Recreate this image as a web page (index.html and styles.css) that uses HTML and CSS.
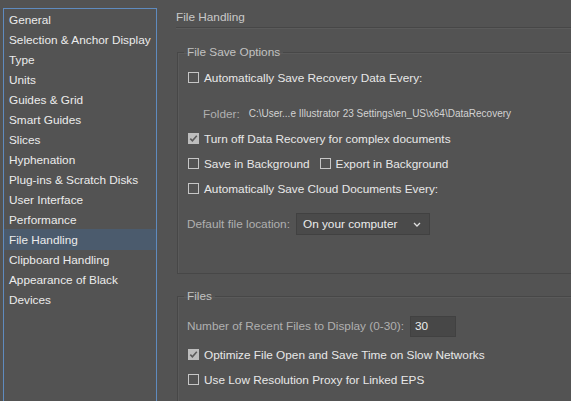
FILE: index.html
```html
<!DOCTYPE html>
<html>
<head>
<meta charset="utf-8">
<link rel="stylesheet" href="styles.css">
</head>
<body>
<div class="page">
  <ul class="sidebar">
    <li>General</li>
    <li>Selection &amp; Anchor Display</li>
    <li>Type</li>
    <li>Units</li>
    <li>Guides &amp; Grid</li>
    <li>Smart Guides</li>
    <li>Slices</li>
    <li>Hyphenation</li>
    <li>Plug-ins &amp; Scratch Disks</li>
    <li>User Interface</li>
    <li>Performance</li>
    <li class="active">File Handling</li>
    <li>Clipboard Handling</li>
    <li>Appearance of Black</li>
    <li>Devices</li>
  </ul>
  <div class="main">
    <div class="title">File Handling</div>
    <fieldset class="group save">
      <legend>File Save Options</legend>
      <div class="row"><span class="cb"></span><span class="lbl">Automatically Save Recovery Data Every:</span></div>
      <div class="row folder"><span class="dim">Folder:</span><span class="path">C:\User...e Illustrator 23 Settings\en_US\x64\DataRecovery</span></div>
      <div class="row"><span class="cb on"><svg viewBox="0 0 11 11" width="11" height="11"><path d="M2.3 5.6 L4.4 7.8 L8.8 2.8" fill="none" stroke="#5b5b5b" stroke-width="1.6"/></svg></span><span class="lbl">Turn off Data Recovery for complex documents</span></div>
      <div class="row"><span class="cb"></span><span class="lbl">Save in Background</span><span class="cb second"></span><span class="lbl">Export in Background</span></div>
      <div class="row"><span class="cb"></span><span class="lbl">Automatically Save Cloud Documents Every:</span></div>
      <div class="locrow"><span class="dim">Default file location:</span>
        <div class="select"><span>On your computer</span><svg viewBox="0 0 8 5" width="8" height="5"><path d="M1 1 L4 4 L7 1" fill="none" stroke="#e0e0e0" stroke-width="1.3"/></svg></div>
      </div>
    </fieldset>
    <fieldset class="group files">
      <legend>Files</legend>
      <div class="numrow"><span class="dim">Number of Recent Files to Display (0-30):</span><div class="input">30</div></div>
      <div class="row"><span class="cb on"><svg viewBox="0 0 11 11" width="11" height="11"><path d="M2.3 5.6 L4.4 7.8 L8.8 2.8" fill="none" stroke="#5b5b5b" stroke-width="1.6"/></svg></span><span class="lbl">Optimize File Open and Save Time on Slow Networks</span></div>
      <div class="row"><span class="cb"></span><span class="lbl">Use Low Resolution Proxy for Linked EPS</span></div>
    </fieldset>
  </div>
</div>
</body>
</html>
```
FILE: styles.css
```css
html, body {
  margin: 0;
  padding: 0;
  background: #535353;
  overflow: hidden;
  width: 571px;
  height: 401px;
}
body {
  font-family: "Liberation Sans", Arial, sans-serif;
  font-size: 11.8px;
  color: #e6e6e6;
}
.page {
  display: flex;
  align-items: flex-start;
  height: 401px;
  overflow: hidden;
}
.sidebar {
  list-style: none;
  margin: 8px 0 0 3px;
  padding: 1px 0 0 0;
  width: 152px;
  height: 400px;
  border: 1px solid #5f8bbf;
  flex: none;
}
.sidebar li {
  height: 20px;
  line-height: 20px;
  padding-left: 5px;
  white-space: nowrap;
  color: #ececec;
}
.sidebar li.active {
  background: #4b5b6d;
  margin-top: -1px;
  padding-top: 1px;
}
.main {
  margin-left: 19px;
  width: 400px;
  flex: none;
}
.title {
  padding-top: 10px;
  padding-bottom: 3px;
  line-height: 14px;
  color: #c9c9c9;
  border-bottom: 1px solid #474747;
  box-shadow: 0 1px 0 #5b5b5b;
}
.group {
  margin: 0 0 0 1px;
  border: 1px solid #474747;
  border-right: none;
  padding: 0 0 0 9px;
  box-shadow: 1px 1px 0 #5a5a5a inset;
}
.group legend {
  padding: 0 3px;
  margin-left: -3px;
  line-height: 14px;
  color: #c2c2c2;
}
.save {
  margin-top: 17px;
  padding-top: 6px;
  padding-bottom: 38px;
}
.files {
  margin-top: 15px;
  padding-top: 11px;
  padding-bottom: 20px;
}
.row {
  height: 25px;
  display: flex;
  align-items: center;
  white-space: nowrap;
}
.cb {
  width: 9px;
  height: 9px;
  border: 1px solid #c6c6c6;
  margin-left: 1px;
  margin-right: 5px;
  flex: none;
  position: relative;
}
.cb.on {
  background: #bdbdbd;
  border-color: #bdbdbd;
}
.cb svg {
  position: absolute;
  left: -1px;
  top: -1px;
}
.cb.second {
  margin-left: 10px;
}
.lbl {
  color: #e8e8e8;
}
.dim {
  color: #b0b0b0;
}
.folder {
  margin-top: 11px;
  padding-left: 16px;
}
.path {
  font-size: 10px;
  color: #d2d2d2;
  margin-left: 9px;
}
.locrow {
  margin-top: 12px;
  display: flex;
  align-items: center;
  white-space: nowrap;
}
.select {
  margin-left: 6px;
  width: 118px;
  height: 20px;
  background: #4a4a4a;
  border: 1px solid #414141;
  display: flex;
  align-items: center;
  justify-content: space-between;
  padding: 0 8px 0 6px;
  color: #ececec;
}
.numrow {
  height: 24px;
  display: flex;
  align-items: center;
  white-space: nowrap;
  margin-bottom: 4px;
}
.input {
  margin-left: 6px;
  width: 40px;
  height: 19px;
  line-height: 19px;
  background: #474747;
  border: 1px solid #414141;
  padding-left: 4px;
  color: #ececec;
}
```
